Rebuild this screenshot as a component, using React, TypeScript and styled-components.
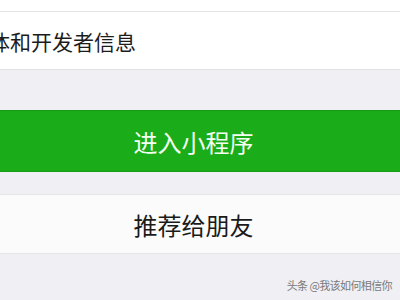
import React from "react";
import styled, { createGlobalStyle } from "styled-components";

const Global = createGlobalStyle`
  html, body { margin: 0; padding: 0; }
  body {
    background: #efeff4;
    font-family: "Noto Sans CJK SC", "Noto Sans", sans-serif;
  }
`;

const Page = styled.div`
  position: relative;
  width: 400px;
  height: 300px;
  overflow: hidden;
  background: #efeff4;
  display: flex;
  flex-direction: column;
`;

const TopStrip = styled.div`
  height: 11px;
  background: #ffffff;
  border-bottom: 1px solid #e4e4e4;
`;

const InfoRow = styled.div`
  height: 57px;
  background: #ffffff;
  border-bottom: 1px solid #e0e0e2;
  display: flex;
  align-items: center;
  overflow: hidden;
`;

const InfoText = styled.span`
  margin-left: -11px;
  font-size: 21px;
  color: #1c1c1c;
  white-space: nowrap;
`;

const Button = styled.div<{ $primary?: boolean; $top: number; $height: number }>`
  margin-top: ${(p) => p.$top}px;
  height: ${(p) => p.$height}px;
  box-sizing: border-box;
  display: flex;
  align-items: center;
  justify-content: center;
  padding-right: 13px;
  font-size: 24px;
  background: ${(p) => (p.$primary ? "#1aad19" : "#fbfbfb")};
  color: ${(p) => (p.$primary ? "#f4fff2" : "#1a1a1a")};
  border-top: 1px solid ${(p) => (p.$primary ? "#179c16" : "#e6e6e8")};
  border-bottom: 1px solid ${(p) => (p.$primary ? "#179c16" : "#e6e6e8")};
`;

const Watermark = styled.div`
  position: absolute;
  right: 8px;
  bottom: 7px;
  font-size: 11px;
  letter-spacing: -0.6px;
  color: #7a7a7a;
  white-space: nowrap;
`;

export default function App() {
  return (
    <>
      <Global />
      <Page>
        <TopStrip />
        <InfoRow>
          <InfoText>体和开发者信息</InfoText>
        </InfoRow>
        <Button $primary $top={40} $height={62}>
          进入小程序
        </Button>
        <Button $top={22} $height={60}>
          推荐给朋友
        </Button>
        <Watermark>头条 @我该如何相信你</Watermark>
      </Page>
    </>
  );
}
